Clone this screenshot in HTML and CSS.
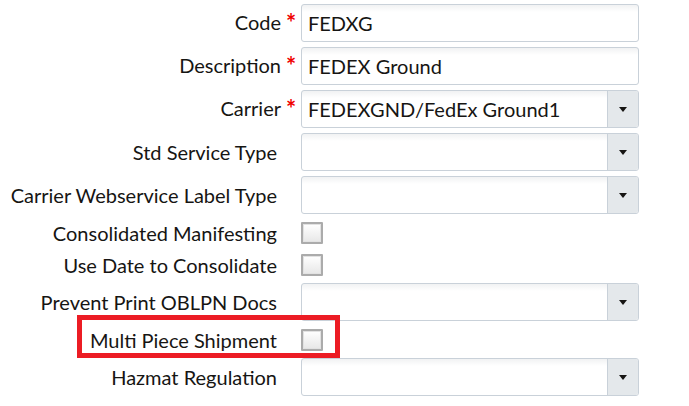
FILE: index.html
```html
<!DOCTYPE html>
<html lang="en">
<head>
    <meta charset="UTF-8">
    <meta name="viewport" content="width=device-width, initial-scale=1.0">
    <title>Ship Via</title>
    <link rel="stylesheet" href="styles.css">
</head>
<body>

<div class="form">
    <div class="row">
        <label class="lbl required">Code<span class="star">*</span></label>
        <div class="field"><span class="value">FEDXG</span></div>
    </div>
    <div class="row">
        <label class="lbl required">Description<span class="star">*</span></label>
        <div class="field"><span class="value">FEDEX Ground</span></div>
    </div>
    <div class="row">
        <label class="lbl required">Carrier<span class="star">*</span></label>
        <div class="field select"><span class="value">FEDEXGND/FedEx Ground1</span><span class="arrow"></span></div>
    </div>
    <div class="row">
        <label class="lbl">Std Service Type</label>
        <div class="field select"><span class="value"></span><span class="arrow"></span></div>
    </div>
    <div class="row">
        <label class="lbl">Carrier Webservice Label Type</label>
        <div class="field select"><span class="value"></span><span class="arrow"></span></div>
    </div>
    <div class="row check-row">
        <label class="lbl">Consolidated Manifesting</label>
        <span class="checkbox"></span>
    </div>
    <div class="row check-row">
        <label class="lbl">Use Date to Consolidate</label>
        <span class="checkbox"></span>
    </div>
    <div class="row">
        <label class="lbl">Prevent Print OBLPN Docs</label>
        <div class="field select"><span class="value"></span><span class="arrow"></span></div>
    </div>
    <div class="row check-row">
        <div class="highlight"></div>
        <label class="lbl">Multi Piece Shipment</label>
        <span class="checkbox"></span>
    </div>
    <div class="row">
        <label class="lbl">Hazmat Regulation</label>
        <div class="field select"><span class="value"></span><span class="arrow"></span></div>
    </div>
</div>

</body>
</html>
```

FILE: styles.css
```css
* {
    box-sizing: border-box;
}
body {
    margin: 0;
    background-color: #ffffff;
    font-family: Lato, "Liberation Sans", sans-serif;
    font-size: 20px;
    color: #161513;
}
.form {
    display: flex;
    flex-direction: column;
    width: 689px;
}
.row {
    position: relative;
    display: flex;
    align-items: center;
    padding: 4px 0 1px;
}
.check-row {
    padding: 7px 0 3px;
}
.lbl {
    width: 301px;
    padding-right: 24px;
    line-height: 22px;
    text-align: right;
    white-space: nowrap;
}
.lbl.required {
    padding-right: 6px;
}
.star {
    color: #f00000;
    margin-left: 5px;
    display: inline-block;
    width: 9px;
    font-size: 24px;
    font-weight: bold;
    line-height: 1;
    vertical-align: -2px;
    text-align: center;
}
.field {
    display: flex;
    align-items: center;
    width: 338px;
    height: 38px;
    border: 1px solid #c9d1d9;
    border-radius: 3px;
    background: linear-gradient(#f1f2f3, #ffffff 7px); /* slight inset look */
    overflow: hidden;
}
.value {
    flex: 1;
    padding-left: 6px;
    white-space: nowrap;
}
.arrow {
    width: 31px;
    height: 100%;
    border-left: 1px solid #c9d1d9;
    background-color: #e4e8eb;
    position: relative;
}
.arrow::after {
    content: "";
    position: absolute;
    left: 11px;
    top: 16px;
    border-left: 4px solid transparent;
    border-right: 4px solid transparent;
    border-top: 5px solid #161513;
}
.checkbox {
    width: 22px;
    height: 22px;
    border: 2px solid #ababab;
    border-radius: 1px;
    background: linear-gradient(#ffffff, #e7e7e7);
    box-shadow: inset 0 0 0 1px #e2e2e2;
}
.highlight {
    position: absolute;
    left: 77px;
    top: -7px;
    width: 263px;
    height: 43px;
    border: 5px solid #ec1c24;
    pointer-events: none;
}
```
